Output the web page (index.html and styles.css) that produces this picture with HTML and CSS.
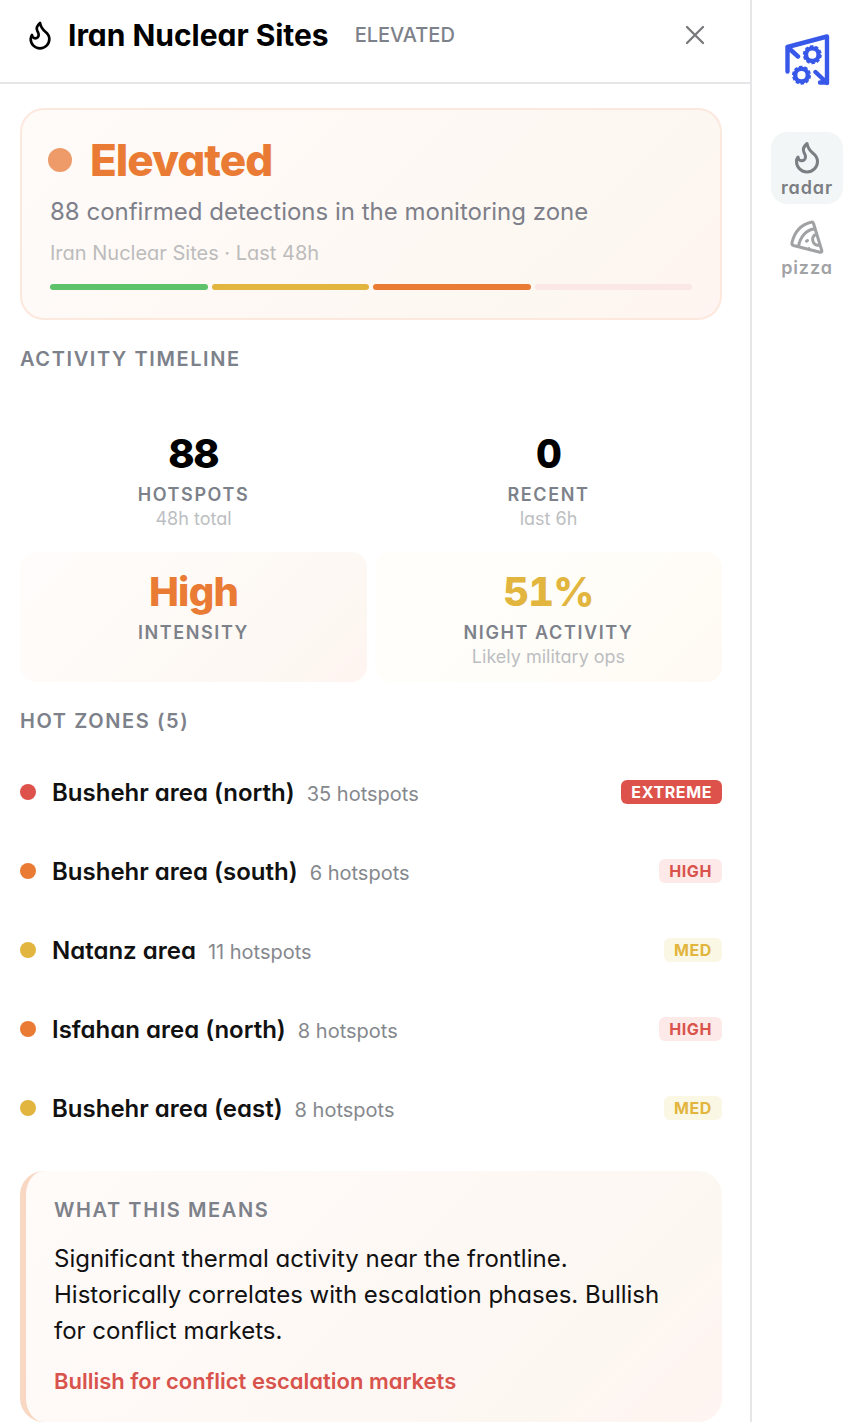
FILE: index.html
```html
<!DOCTYPE html>
<html lang="en">

<head>
  <meta charset="UTF-8" />
  <meta name="viewport" content="width=device-width, initial-scale=1" />
  <title>Iran Nuclear Sites</title>

  <link rel="stylesheet" href="styles.css">
</head>

<body>

  <main class="panel">
    <header class="panel-header">
      <svg class="flame" viewBox="0 0 24 24"><path d="M8.5 14.5A2.5 2.5 0 0 0 11 12c0-1.38-.5-2-1-3-1.072-2.143-.224-4.054 2-6 .5 2.5 2 4.9 4 6.5 2 1.6 3 3.5 3 5.5a7 7 0 1 1-14 0c0-1.153.433-2.294 1-3a2.5 2.5 0 0 0 2.5 2.5z" /></svg>
      <h1>Iran Nuclear Sites</h1>
      <span class="status">ELEVATED</span>
      <button class="close" aria-label="Close">
        <svg viewBox="0 0 22 22"><path d="M3 3l16 16M19 3L3 19" /></svg>
      </button>
    </header>

    <div class="content">
      <section class="threat">
        <div class="threat-top">
          <span class="threat-dot"></span>
          <span class="threat-level">Elevated</span>
        </div>
        <p class="threat-text">88 confirmed detections in the monitoring zone</p>
        <p class="threat-meta">Iran Nuclear Sites · Last 48h</p>
        <div class="scale">
          <span class="green"></span>
          <span class="yellow"></span>
          <span class="orange"></span>
          <span class="off"></span>
        </div>
      </section>

      <h2 class="timeline-title">Activity Timeline</h2>

      <section class="stats">
        <div class="stat">
          <div class="value">88</div>
          <div class="label">Hotspots</div>
          <div class="sub">48h total</div>
        </div>
        <div class="stat">
          <div class="value">0</div>
          <div class="label">Recent</div>
          <div class="sub">last 6h</div>
        </div>
        <div class="stat stat-high">
          <div class="value">High</div>
          <div class="label">Intensity</div>
        </div>
        <div class="stat stat-night">
          <div class="value">51%</div>
          <div class="label">Night Activity</div>
          <div class="sub">Likely military ops</div>
        </div>
      </section>

      <h2 class="zones-title">Hot Zones (5)</h2>

      <ul class="zones">
        <li>
          <span class="dot red"></span>
          <span class="name">Bushehr area (north)</span>
          <span class="count">35 hotspots</span>
          <span class="badge extreme">EXTREME</span>
        </li>
        <li>
          <span class="dot orange"></span>
          <span class="name">Bushehr area (south)</span>
          <span class="count">6 hotspots</span>
          <span class="badge high">HIGH</span>
        </li>
        <li>
          <span class="dot yellow"></span>
          <span class="name">Natanz area</span>
          <span class="count">11 hotspots</span>
          <span class="badge med">MED</span>
        </li>
        <li>
          <span class="dot orange"></span>
          <span class="name">Isfahan area (north)</span>
          <span class="count">8 hotspots</span>
          <span class="badge high">HIGH</span>
        </li>
        <li>
          <span class="dot yellow"></span>
          <span class="name">Bushehr area (east)</span>
          <span class="count">8 hotspots</span>
          <span class="badge med">MED</span>
        </li>
      </ul>

      <section class="meaning">
        <h2>What This Means</h2>
        <p>Significant thermal activity near the frontline. Historically correlates with escalation phases. Bullish for conflict markets.</p>
        <strong>Bullish for conflict escalation markets</strong>
      </section>
    </div>
  </main>

  <nav class="sidebar">
    <svg class="logo" viewBox="0 0 46 52">
      <path d="M3.5 37.5V13L43 2.5v46.5M3.5 13l10.500 9.500M31.500 38l10.500 10M36 48.500h7" />
      <circle cx="28.300" cy="20.700" r="6.300" />
      <circle class="teeth" cx="28.300" cy="20.700" r="8" />
      <circle cx="17.500" cy="41.200" r="6.300" />
      <circle class="teeth" cx="17.500" cy="41.200" r="8" />
    </svg>

    <a class="nav-item active">
      <svg class="flame" viewBox="0 0 24 24"><path d="M8.5 14.5A2.5 2.5 0 0 0 11 12c0-1.38-.5-2-1-3-1.072-2.143-.224-4.054 2-6 .5 2.5 2 4.9 4 6.5 2 1.6 3 3.5 3 5.5a7 7 0 1 1-14 0c0-1.153.433-2.294 1-3a2.5 2.5 0 0 0 2.5 2.5z" /></svg>
      <span>radar</span>
    </a>
    <a class="nav-item">
      <svg class="pizza" viewBox="0 0 36 36">
        <path d="M3 23.500C5.500 13 12.500 5.500 22 3.200q2-.400 2.500 1.300l8.300 27q.400 2.200-1.800 1.800L4.500 26.500Q2.500 25.800 3 23.500zM9.500 27.500C11 18 17 11 25.800 9.500M27.500 15.500C24 16 23 19 24 22.500c1 3 3.500 4.500 6.500 3.500M17.500 22.200l1-.700M20 29.500l.5.700" />
      </svg>
      <span>pizza</span>
    </a>
  </nav>

</body>
</html>
```
FILE: styles.css
```css
* {
  box-sizing: border-box;
}

body {
  margin: 0;
  display: flex;
  height: 1422px;
  overflow: hidden;
  background: #fff;
  color: #111;
  font-family: Inter, sans-serif;
  font-feature-settings: "cv11";
}

h1, h2, p, ul {
  margin: 0;
  padding: 0;
}

svg {
  fill: none;
  stroke: currentColor;
  stroke-width: 2;
  stroke-linecap: round;
  stroke-linejoin: round;
}

.panel {
  width: 752px;
  border-right: 2px solid #e6e6e8;
}

.panel-header {
  display: flex;
  align-items: center;
  height: 84px;
  padding: 0 44px 12px 24px;
  border-bottom: 2px solid #e6e6e8;
}

.panel-header .flame {
  width: 32px;
  height: 32px;
  color: #000;
}

h1 {
  margin-left: 12px;
  font-size: 30px;
  font-weight: 700;
  line-height: 40px;
  letter-spacing: -0.03px;
  color: #000;
}

.status {
  margin-left: 26px;
  font-size: 20px;
  font-weight: 500;
  color: #7d818a;
}

.close {
  margin-left: auto;
  padding: 0;
  width: 22px;
  height: 22px;
  border: none;
  background: none;
  color: #77797c;
}

.close svg {
  display: block;
  stroke-width: 2.3;
}

.content {
  padding: 24px 28px 0 20px;
}

.threat {
  height: 212px;
  padding: 26px 28px 0;
  border: 2px solid #fce8dd;
  border-radius: 24px;
  background: linear-gradient(135deg, #fffbf9 0%, #fdf7f1 80%, #fff4f1 100%);
}

.threat-top {
  display: flex;
  align-items: center;
  gap: 18px;
  height: 48px;
  margin-left: -2px;
}

.threat-dot {
  width: 24px;
  height: 24px;
  border-radius: 50%;
  background: #ee9b69;
}

.threat-level {
  font-size: 44px;
  font-weight: 800;
  letter-spacing: -1px;
  color: #e97b35;
}

.threat-text {
  margin-top: 10px;
  font-size: 24px;
  line-height: 36px;
  color: #7d808a;
}

.threat-meta {
  margin-top: 8px;
  font-size: 20px;
  line-height: 30px;
  color: #bcbcbc;
}

.scale {
  display: flex;
  gap: 4px;
  margin-top: 16px;
}

.scale span {
  flex: 1;
  height: 6px;
  border-radius: 3px;
}

.green {
  background: #5ec26a;
}

.yellow {
  background: #e2b53e;
}

.orange {
  background: #e97b35;
}

.red {
  background: #de524c;
}

.scale .off {
  background: #fbe7e6;
}

h2 {
  font-size: 20px;
  font-weight: 600;
  line-height: 30px;
  letter-spacing: 1.6px;
  text-transform: uppercase;
  color: #7d818a;
}

.timeline-title {
  margin-top: 24px;
}

.stats {
  display: grid;
  grid-template-columns: 1fr 1fr;
  gap: 8px;
  margin-top: 40px;
}

.stat {
  height: 130px;
  padding-top: 20px;
  border-radius: 16px;
  text-align: center;
}

.stat-high {
  background: linear-gradient(135deg, #fffdfb, #fdf7f2 85%, #fff4f1);
}

.stat-night {
  background: linear-gradient(135deg, #fffefb, #fffdf8 60%, #fff9f3);
}

.value {
  font-size: 40px;
  font-weight: 800;
  line-height: 40px;
  letter-spacing: -0.8px;
  font-feature-settings: "cv11", "tnum";
  color: #000;
}

.stat-high .value {
  color: #e97b35;
}

.stat-night .value {
  color: #e2b53e;
}

.label {
  margin-top: 8px;
  font-size: 18px;
  font-weight: 600;
  line-height: 26px;
  letter-spacing: 1.6px;
  text-transform: uppercase;
  color: #7d818a;
}

.sub {
  font-size: 18px;
  line-height: 22px;
  color: #bcbec1;
}

.zones-title {
  margin-top: 24px;
}

.zones {
  margin-top: 16px;
  list-style: none;
}

.zones li {
  display: flex;
  align-items: center;
  height: 79px;
}

.dot {
  width: 16px;
  height: 16px;
  border-radius: 50%;
}

.name {
  margin-left: 16px;
  padding-top: 2px;
  font-size: 24px;
  font-weight: 600;
}

.count {
  margin-left: 12px;
  padding-top: 5px;
  font-size: 20px;
  color: #85888d;
}

.badge {
  margin-left: auto;
  padding: 0 10px;
  border-radius: 6px;
  font-size: 16px;
  font-weight: 700;
  line-height: 24px;
  letter-spacing: 0.6px;
}

.extreme {
  background: #de524c;
  color: #fff;
}

.high {
  background: #fde9e8;
  color: #d9534d;
}

.med {
  background: #fbf7e5;
  color: #e2b53e;
}

.meaning {
  height: 251px;
  margin-top: 24px;
  padding: 24px 28px 0;
  border-left: 6px solid #f8d7c3;
  border-radius: 24px;
  background: linear-gradient(135deg, #fffbf9 0%, #fdf7f2 80%, #fff4f1 100%);
}

.meaning p {
  margin-top: 16px;
  font-size: 24px;
  line-height: 36px;
}

.meaning strong {
  display: block;
  margin-top: 16px;
  font-size: 22px;
  font-weight: 600;
  line-height: 33px;
  color: #d9534d;
}

.sidebar {
  flex: 1;
  display: flex;
  flex-direction: column;
  align-items: center;
  padding: 34px 0 0 10px;
}

.logo {
  width: 46px;
  height: 52px;
  stroke-width: 4.400;
  color: #3858e9;
}

/* ten teeth around each gear */
.logo .teeth {
  stroke-width: 3;
  stroke-dasharray: 3.200 1.827;
  stroke-linecap: butt;
}

.nav-item {
  display: flex;
  flex-direction: column;
  align-items: center;
  width: 72px;
  height: 72px;
  margin-bottom: 8px;
  padding-top: 7px;
  border-radius: 16px;
  font-size: 18px;
  font-weight: 600;
  line-height: 22px;
  letter-spacing: 0.9px;
  color: #a0a2a4;
}

.nav-item svg {
  width: 36px;
  height: 36px;
  margin-bottom: 2px;
}

.nav-item.active {
  margin-top: 46px;
  background: #f3f6f7;
  color: #7b7e82;
}

.pizza {
  stroke-width: 3;
}
```
